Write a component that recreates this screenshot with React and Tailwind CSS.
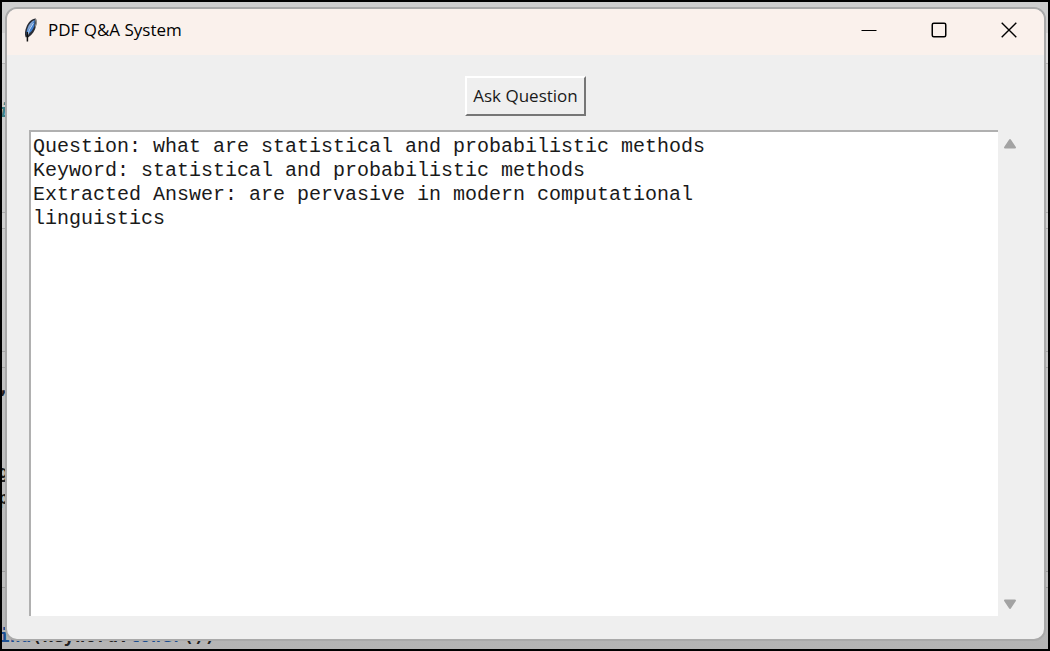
const answer = [
  "Question: what are statistical and probabilistic methods",
  "Keyword: statistical and probabilistic methods",
  "Extracted Answer: are pervasive in modern computational",
  "linguistics",
].join("\n");

function FeatherIcon() {
  return (
    <svg className="h-6 w-4 shrink-0" viewBox="0 0 16 24" aria-hidden="true">
      <path d="M12.8 .5C8.6 1 5.2 4 3.4 9C2 12.5 1.4 16 2.6 19.2L5.4 19.2C9.5 16.5 12.2 12.5 13 8C13.5 5.2 14 2.6 12.8 .5Z" fill="#2a2d36" />
      <path d="M11.8 2C8.6 3.4 6 6 4.6 10C3.6 12.8 3.2 15 3.8 17C7.6 14.8 10.6 11.5 11.4 7.5Z" fill="#3f7fd0" />
      <path d="M11.4 2.2C8.4 3.6 6.2 6.4 5 9.6L4 14L7.8 8Z" fill="#86a5cf" />
      <path d="M10.4 5.2L6.4 11.8L4.4 18" fill="none" stroke="#c9dbf3" strokeWidth="1" />
      <path d="M12.6 1.2L13.4 5L12.2 8.8" fill="none" stroke="#8d8d8d" strokeWidth="1.3" />
      <path d="M4.4 14L4.4 23.4" fill="none" stroke="#111" strokeWidth="1.5" />
    </svg>
  );
}

function TitleBar() {
  return (
    <header className="flex h-[46px] shrink-0 items-center bg-[#faf1ec] pb-1 pl-4">
      <FeatherIcon />
      <h1 className="ml-[9px] grow font-['Open_Sans','Noto_Sans',sans-serif] text-[17px] leading-6 text-black">
        PDF Q&amp;A System
      </h1>
      <div className="flex h-full text-black">
        <button type="button" aria-label="Minimize" className="flex w-[70px] items-center justify-center">
          <svg className="size-4" viewBox="0 0 16 16" fill="none" stroke="currentColor">
            <path d="M.5 8.5H15.5" />
          </svg>
        </button>
        <button type="button" aria-label="Maximize" className="flex w-[70px] items-center justify-center">
          <svg className="size-4" viewBox="0 0 16 16" fill="none" stroke="currentColor" strokeWidth="1.5">
            <rect x="1.25" y="1.25" width="13.5" height="13.5" rx="1.5" />
          </svg>
        </button>
        <button type="button" aria-label="Close" className="flex w-[70px] items-center justify-center">
          <svg className="size-4" viewBox="0 0 16 16" fill="none" stroke="currentColor" strokeWidth="1.4">
            <path d="M.7 .7L15.3 15.3M15.3 .7L.7 15.3" />
          </svg>
        </button>
      </div>
    </header>
  );
}

function ScrollBar() {
  return (
    <div className="flex w-6 shrink-0 flex-col items-center justify-between pt-2 pb-1.5">
      <button type="button" aria-label="Scroll up">
        <svg className="h-3 w-4" viewBox="0 0 16 12">
          <path d="M8 2L13 9.5H3Z" fill="#a3a3a3" stroke="#a3a3a3" strokeWidth="2" strokeLinejoin="round" />
        </svg>
      </button>
      <button type="button" aria-label="Scroll down">
        <svg className="h-3 w-4" viewBox="0 0 16 12">
          <path d="M8 10L13 2.5H3Z" fill="#a3a3a3" stroke="#a3a3a3" strokeWidth="2" strokeLinejoin="round" />
        </svg>
      </button>
    </div>
  );
}

/* The code notebook that shows round the edges of the window. */
function Notebook() {
  return (
    <div
      aria-hidden="true"
      className="absolute inset-0 overflow-hidden bg-linear-to-b from-[#d4d4d4] via-[#c4c4c4] to-[#b4b4b4] font-['DejaVu_Sans_Mono',monospace] text-lg leading-6 font-bold text-[#222]"
    >
      <div className="absolute inset-x-0 top-0 h-[31px] bg-[#cecece]" />
      <div className="absolute inset-x-0 top-[31px] h-[31px] border-b border-[#b5b5b5] bg-[#dcdcdc]" />
      <div className="absolute inset-x-0 top-[210px] h-[17px] border-y border-[#aaa] bg-[#cfcfcf]" />
      <div className="absolute inset-x-0 top-[349px] h-[17px] border-y border-[#a5a5a5] bg-[#c6c6c6]" />
      <div className="absolute inset-x-0 top-[569px] h-[17px] border-y border-[#999] bg-[#bebebe]" />
      <span className="absolute top-[97px] -left-1 text-[#3c7f86] italic">i</span>
      <span className="absolute top-[374px] -left-1">,</span>
      <span className="absolute top-[458px] -left-1">g</span>
      <span className="absolute top-[484px] -left-1">p</span>
      <code className="absolute top-[622px] -left-3.5 font-['DejaVu_Sans_Mono',monospace] whitespace-pre">
        <span className="text-[#1d4f91]">find</span>(keyword.<span className="text-[#1d4f91]">lower</span>())
      </code>
    </div>
  );
}

export default function App() {
  return (
    <div className="relative flex min-h-screen flex-col border-2 border-black">
      <Notebook />
      <div className="relative mt-[5px] mr-0.5 mb-2 ml-[3px] flex grow flex-col overflow-hidden rounded-xl border-2 border-[#a9a9a9] bg-[#efefef]">
        <TitleBar />
        <main className="flex grow flex-col pt-[21px] pr-[22px] pb-[23px] pl-[22px]">
          <button
            type="button"
            className="h-10 self-center border-2 border-t-white border-r-[#767676] border-b-[#767676] border-l-white bg-[#efefef] px-1.5 font-['Open_Sans','Noto_Sans',sans-serif] text-[17px] leading-6 text-[#1a1a1a]"
          >
            Ask Question
          </button>
          <div className="mt-3.5 flex grow">
            <textarea
              readOnly
              aria-label="Answer"
              defaultValue={answer}
              className="grow resize-none border-t-2 border-l-2 border-[#b0b0b0] bg-white px-0.5 py-[3px] font-['Liberation_Mono',monospace] text-xl leading-6 text-[#1a1a1a] outline-none"
            />
            <ScrollBar />
          </div>
        </main>
      </div>
    </div>
  );
}
